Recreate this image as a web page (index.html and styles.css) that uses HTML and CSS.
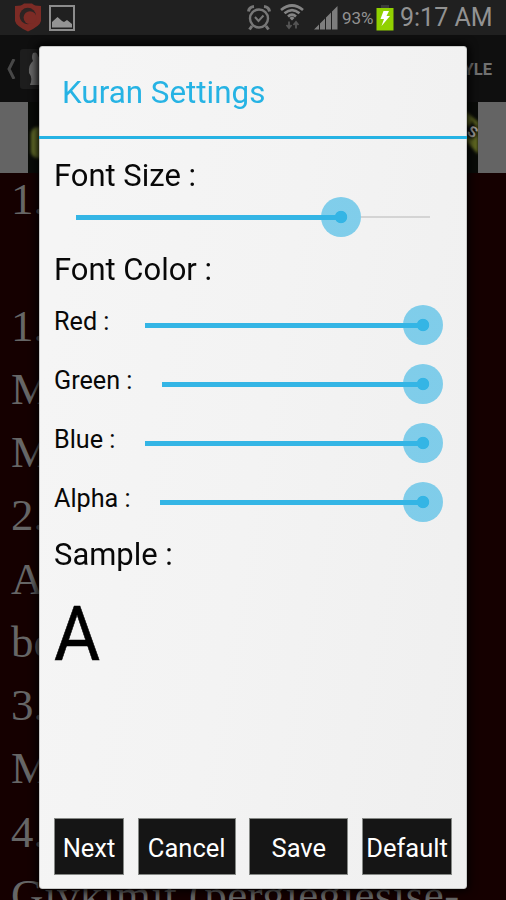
FILE: index.html
```html
<!DOCTYPE html>
<html lang="en">
<head>
<meta charset="utf-8">
<title>Kuran Settings</title>
<link rel="stylesheet" href="styles.css">
</head>
<body>
<div class="screen">
  <header class="status">
    <svg class="shield" viewBox="0 0 26 29"><path d="M0 3Q7 3 9 .5H17Q19 3 26 3V18Q25 23 13 28.5Q1 23 0 18Z" fill="#7c2b25"/><circle cx="12.8" cy="13" r="8.2" fill="#2c2423"/><circle cx="15" cy="14.600" r="6.400" fill="#7c2b25"/></svg>
    <svg class="picture" viewBox="0 0 26 26"><path d="M1 1H25V25H1Z" fill="none" stroke="#8c8c8c" stroke-width="2"/><path d="M3 22.500V17L8.500 12L13 16L15 17L18 15L23 19V22.500Z" fill="#949494"/></svg>
    <span class="gap"></span>
    <svg class="alarm" viewBox="0 0 24 26"><g fill="none" stroke="#777"><circle cx="12" cy="13.5" r="9" stroke-width="2.4"/><path d="M8 12L11.5 16L16.5 10.5" stroke-width="2"/><path d="M1.5 6.5Q2 2 7 1.5M22.5 6.5Q22 2 17 1.5" stroke-width="3"/><path d="M5 21L2.5 24.5M19 21L21.500 24.5" stroke-width="3"/></g></svg>
    <svg class="wifi" viewBox="0 0 24 27"><g fill="none" stroke="#848484" stroke-width="2.7"><path d="M1 6Q12 -3 23 6"/><path d="M4.500 9.300Q12 3 19.500 9.300"/><path d="M8 12.500Q12 9 16 12.500"/></g><path d="M9.500 14Q12 11.500 14.500 14L12 16.500Z" fill="#848484"/><path d="M9 17.500V23M6.500 21L9 24L11.500 21M16 24.500V19M13.500 21L16 18L18.500 21" fill="none" stroke="#555" stroke-width="1.800"/></svg>
    <svg class="signal" viewBox="0 0 24 24"><path d="M0 23.500L5 18.500V23.500ZM6 23.500V17.500L11 12.500V23.500ZM12 23.500V11.500L17 6.500V23.500ZM18 23.500V5.500L23.500 0V23.500Z" fill="#7d7d7d"/></svg>
    <span class="percent">93%</span>
    <svg class="battery" viewBox="0 0 18 26"><path d="M5 0H13V3H5Z" fill="#3b3b3b"/><path d="M.5 3H17.500V25.500H.5Z" fill="#91d100"/><path d="M7.500 6H13L10.500 11H14L5.500 21L8 14H4.500Z" fill="#fff"/></svg>
    <span class="clock">9:17 AM</span>
  </header>
  <div class="appbar">
    <svg class="back" viewBox="0 0 10 20"><path d="M8 0L3 10L8 20" fill="none" stroke="#474747" stroke-width="3"/></svg>
    <svg class="appicon" viewBox="0 0 40 40"><rect width="40" height="40" rx="3" fill="#1d1d1d"/><path d="M13 4Q17 2 18 7Q23 12 21 36H10Q13 29 9 24Q8 16 13 12Q11 8 13 4Z" fill="#686868"/></svg>
    <span class="gap"></span>
    <span class="style">STYLE</span>
  </div>
  <div class="ad">
    <svg class="banner" viewBox="0 0 450 71"><defs><filter id="soft"><feGaussianBlur stdDeviation="1.500"/></filter></defs><rect width="450" height="71" fill="#090b08"/><g filter="url(#soft)"><rect x="3" y="25" width="24" height="31" rx="7" fill="#68722a"/><path d="M430 3L450 20V52L430 31Z" fill="#626a20"/><path d="M430 15L440 24L444 18L449 24V34L444 38L430 30Z" fill="#111"/></g><text x="438" y="32" transform="rotate(30 438 32)" class="adtext">S</text></svg>
  </div>
  <main class="verses">
    <p>1.</p><p>&nbsp;</p><p class="long"><span>1.</span><span>.</span></p><p>M</p><p>M</p><p>2.</p><p>A</p><p>be</p><p>3.</p><p>M</p><p>4.</p><p class="last">Givkimit (pergjegjesise-</p>
  </main>
  <section class="dialog">
    <h1><span>Kuran Settings</span></h1>
    <div class="content">
      <h2 class="size"><span>Font Size :</span></h2>
      <div class="slider main"><i class="fill"></i><i class="thumb"></i><i class="rest"></i></div>
      <h2 class="color"><span>Font Color :</span></h2>
      <div class="row"><label class="short">Red :</label><div class="slider"><i class="fill"></i><i class="thumb"></i></div></div>
      <div class="row"><label class="green">Green :</label><div class="slider"><i class="fill"></i><i class="thumb"></i></div></div>
      <div class="row"><label class="short">Blue :</label><div class="slider"><i class="fill"></i><i class="thumb"></i></div></div>
      <div class="row"><label class="alpha">Alpha :</label><div class="slider"><i class="fill"></i><i class="thumb"></i></div></div>
      <h2 class="samplelabel"><span>Sample :</span></h2>
      <div class="sample"><span>A</span></div>
      <div class="buttons"><button><span>Next</span></button><button><span>Cancel</span></button><button><span>Save</span></button><button><span>Default</span></button></div>
    </div>
  </section>
</div>
</body>
</html>
```
FILE: styles.css
```css
* { box-sizing: border-box; }
body { margin: 0; background: #150000; font-family: Roboto, "Liberation Sans", sans-serif; }
h1, h2, p { margin: 0; font-weight: 400; }
svg { display: block; flex: none; }
.screen { position: relative; width: 506px; height: 900px; overflow: hidden; background: #150000; }
.gap { flex: 1; }
.status { height: 35px; display: flex; align-items: flex-start; background: #202020; padding: 0 14px 0 15px; color: #929292; }
.shield { width: 26px; height: 29px; margin-top: 3px; }
.picture { width: 26px; height: 26px; margin: 5px 0 0 8px; }
.alarm { width: 24px; height: 26px; margin-top: 5px; }
.wifi { width: 24px; height: 27px; margin: 4px 0 0 9px; }
.signal { width: 24px; height: 24px; margin: 6px 0 0 10px; }
.percent { width: 32px; margin: 0 0 0 4px; font-size: 17px; line-height: 36px; white-space: nowrap; }
.battery { width: 18px; height: 26px; margin: 5px 0 0 2px; }
.clock { width: 92px; margin-left: 6px; font-size: 25px; line-height: 35px; white-space: nowrap; }
.appbar { height: 67px; display: flex; align-items: center; background: #0f0f0f; padding: 0 14px 0 6px; }
.back { width: 10px; height: 20px; }
.appicon { width: 40px; height: 40px; margin-left: 4px; }
.style { color: #707070; font-weight: 700; font-size: 16.5px; padding-top: 2px; }
.ad { height: 71px; background: #646464; display: flex; justify-content: center; }
.banner { width: 450px; height: 71px; }
.adtext { font: 700 15px Roboto, sans-serif; fill: #999; }
.verses { padding-left: 11px; color: #666; font-family: "Liberation Serif", serif; font-size: 45px; white-space: nowrap; overflow: hidden; height: 727px; }
.verses p { height: 63.25px; line-height: 53px; }
.verses .long { display: flex; justify-content: space-between; padding-right: 36px; }
.verses .last { letter-spacing: .45px; }
.dialog { position: absolute; left: 39px; top: 46px; width: 428px; height: 843px; border: 1px solid #c9cac9; border-radius: 3px; background: linear-gradient(100deg, #f5f5f5 10%, #f3f3f3 50%, #efefef); box-shadow: 0 0 9px 2px #000; display: flex; flex-direction: column; color: #080808; }
h1 { height: 92px; flex: none; border-bottom: 3px solid #26b3e4; margin: 0 -1px; padding-left: 23px; font-size: 31px; line-height: 92px; color: #26b3e4; }
h1 span, h2 span, .sample span { display: inline-block; transform-origin: 0 50%; white-space: nowrap; }
h1 span { transform: scaleX(1.012); }
h2 span { transform: scaleX(1.015); }
.content { flex: 1; display: flex; flex-direction: column; padding: 0 14px 13px; }
h2 { font-size: 30.5px; line-height: 36px; height: 36px; }
.size { margin-top: 19px; }
.slider { display: flex; align-items: center; height: 40px; flex: 1; }
.slider i { display: block; }
.fill { height: 5px; flex: 1; background: #34b5e5; margin-right: -20px; }
.thumb { width: 40px; height: 40px; flex: none; border-radius: 50%; background: radial-gradient(circle, #34b5e5 5.800px, rgba(52,181,229,.6) 6.600px); }
.main { flex: none; margin: 3px 22px 0; }
.main .fill { flex: 0 0 265px; }
.rest { height: 2px; flex: 1; background: #d4d4d4; }
.color { margin: 15px 0 19px; }
.row { display: flex; height: 59px; padding-right: 9px; }
label { font-size: 25.200px; line-height: 30px; flex: none; width: 91px; white-space: nowrap; }
.row .green { width: 108px; }
.row .alpha { width: 106px; }
.row .slider { margin-top: -2px; }
.samplelabel { margin-top: -6px; }
.sample { height: 90px; margin-top: 16px; font-size: 76px; line-height: 90px; color: #000; }
.sample span { transform: scaleX(.93); -webkit-text-stroke: .6px #000; }
.buttons { margin-top: auto; display: grid; grid-template-columns: 70px 98px 99px 90px; justify-content: space-between; height: 57px; }
button { border: 1px solid #858885; background: #151515; color: #fff; padding: 2px 0 0; font: 25.500px Roboto, sans-serif; display: flex; justify-content: center; align-items: center; white-space: nowrap; }
```
